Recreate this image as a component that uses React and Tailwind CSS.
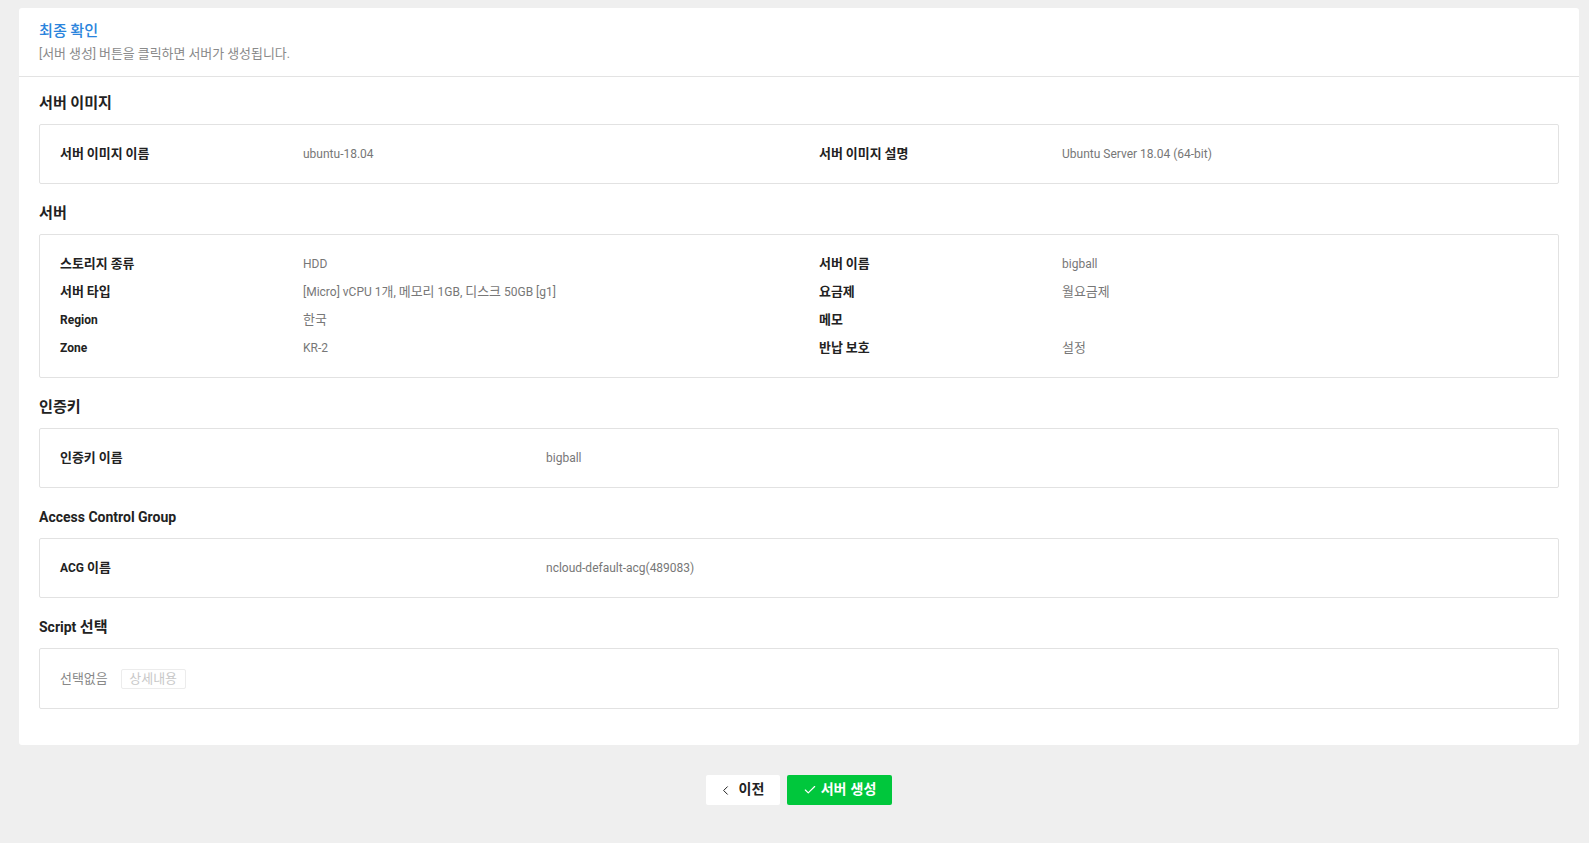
import React from "react";
import { ChevronLeft, Check } from "lucide-react";

const font = { fontFamily: 'Roboto, "Noto Sans CJK KR", "Noto Sans", sans-serif' };

// Hangul runs are drawn slightly larger, as in the reference
function K({ children }) {
  if (typeof children !== "string") return children;
  const parts = children.split(/([\uAC00-\uD7A3\u3131-\u318E]+)/);
  return parts.map((p, i) =>
    /[\uAC00-\uD7A3\u3131-\u318E]/.test(p) ? (
      <span key={i} className="text-[1.08em]">
        {p}
      </span>
    ) : (
      <React.Fragment key={i}>{p}</React.Fragment>
    )
  );
}

function SectionTitle({ children, first }) {
  return (
    <h3 className={`text-[14px] leading-5 font-bold text-[#222] mb-[11px] ${first ? "" : "mt-[19px]"}`}>
      <K>{children}</K>
    </h3>
  );
}

function Box({ children, className = "" }) {
  return (
    <div className={`border border-[#e2e2e2] rounded-[2px] py-[15px] ${className}`}>
      {children}
    </div>
  );
}

function Row({ label, value }) {
  return (
    <div className="flex items-center h-7 text-[12px]">
      <div className="w-[243px] shrink-0 font-bold text-[#222]">
        <K>{label}</K>
      </div>
      <div className="text-[#777]">
        <K>{value}</K>
      </div>
    </div>
  );
}

function RowFull({ label, value }) {
  return (
    <div className="flex items-center h-7 text-[12px] pl-5">
      <div className="w-[486px] shrink-0 font-bold text-[#222]">
        <K>{label}</K>
      </div>
      <div className="text-[#777]">
        <K>{value}</K>
      </div>
    </div>
  );
}

export default function App() {
  return (
    <div style={font} className="min-h-[843px] w-full bg-[#efefef] pt-2 pl-[19px] pr-[10px] pb-10">
      <div className="bg-white rounded-[3px]">
        <div className="px-5 pt-[13px] pb-[13px] border-b border-[#e3e3e3]">
          <h2 className="text-[14px] leading-5 font-medium text-[#2a84dc]">
            <K>최종 확인</K>
          </h2>
          <p className="mt-[4px] text-[12px] leading-[18px] text-[#8a8a8a]">
            <K>[서버 생성] 버튼을 클릭하면 서버가 생성됩니다.</K>
          </p>
        </div>
        <div className="px-5 pt-4 pb-[36px]">
          <SectionTitle first>서버 이미지</SectionTitle>
          <Box>
            <div className="grid grid-cols-2">
              <div className="pl-5">
                <Row label="서버 이미지 이름" value="ubuntu-18.04" />
              </div>
              <div className="pl-5">
                <Row label="서버 이미지 설명" value="Ubuntu Server 18.04 (64-bit)" />
              </div>
            </div>
          </Box>

          <SectionTitle>서버</SectionTitle>
          <Box>
            <div className="grid grid-cols-2">
              <div className="pl-5">
                <Row label="스토리지 종류" value="HDD" />
                <Row label="서버 타입" value="[Micro] vCPU 1개, 메모리 1GB, 디스크 50GB [g1]" />
                <Row label="Region" value="한국" />
                <Row label="Zone" value="KR-2" />
              </div>
              <div className="pl-5">
                <Row label="서버 이름" value="bigball" />
                <Row label="요금제" value="월요금제" />
                <Row label="메모" value="" />
                <Row label="반납 보호" value="설정" />
              </div>
            </div>
          </Box>

          <SectionTitle>인증키</SectionTitle>
          <Box>
            <RowFull label="인증키 이름" value="bigball" />
          </Box>

          <SectionTitle>Access Control Group</SectionTitle>
          <Box>
            <RowFull label="ACG 이름" value="ncloud-default-acg(489083)" />
          </Box>

          <SectionTitle>Script 선택</SectionTitle>
          <Box>
            <div className="flex items-center h-[29px] text-[12px] pl-5">
              <span className="text-[#888]">
                <K>선택없음</K>
              </span>
              <span className="ml-[13px] inline-flex items-center justify-center w-[65px] h-5 border border-[#ececec] rounded-[2px] text-[#c8c8c8]">
                <K>상세내용</K>
              </span>
            </div>
          </Box>
        </div>
      </div>

      <div className="flex justify-center gap-[7px] mt-[30px]">
        <button className="flex items-center justify-center gap-[6px] w-[74px] h-[30px] bg-white rounded-[2px] text-[13px] font-bold text-[#222]">
          <ChevronLeft size={15} strokeWidth={1.6} className="-ml-1" />
          <K>이전</K>
        </button>
        <button className="flex items-center justify-center gap-[4px] w-[105px] h-[30px] bg-[#00c73c] rounded-[2px] text-[13px] font-bold text-white">
          <Check size={14} strokeWidth={2} />
          <K>서버 생성</K>
        </button>
      </div>
    </div>
  );
}
